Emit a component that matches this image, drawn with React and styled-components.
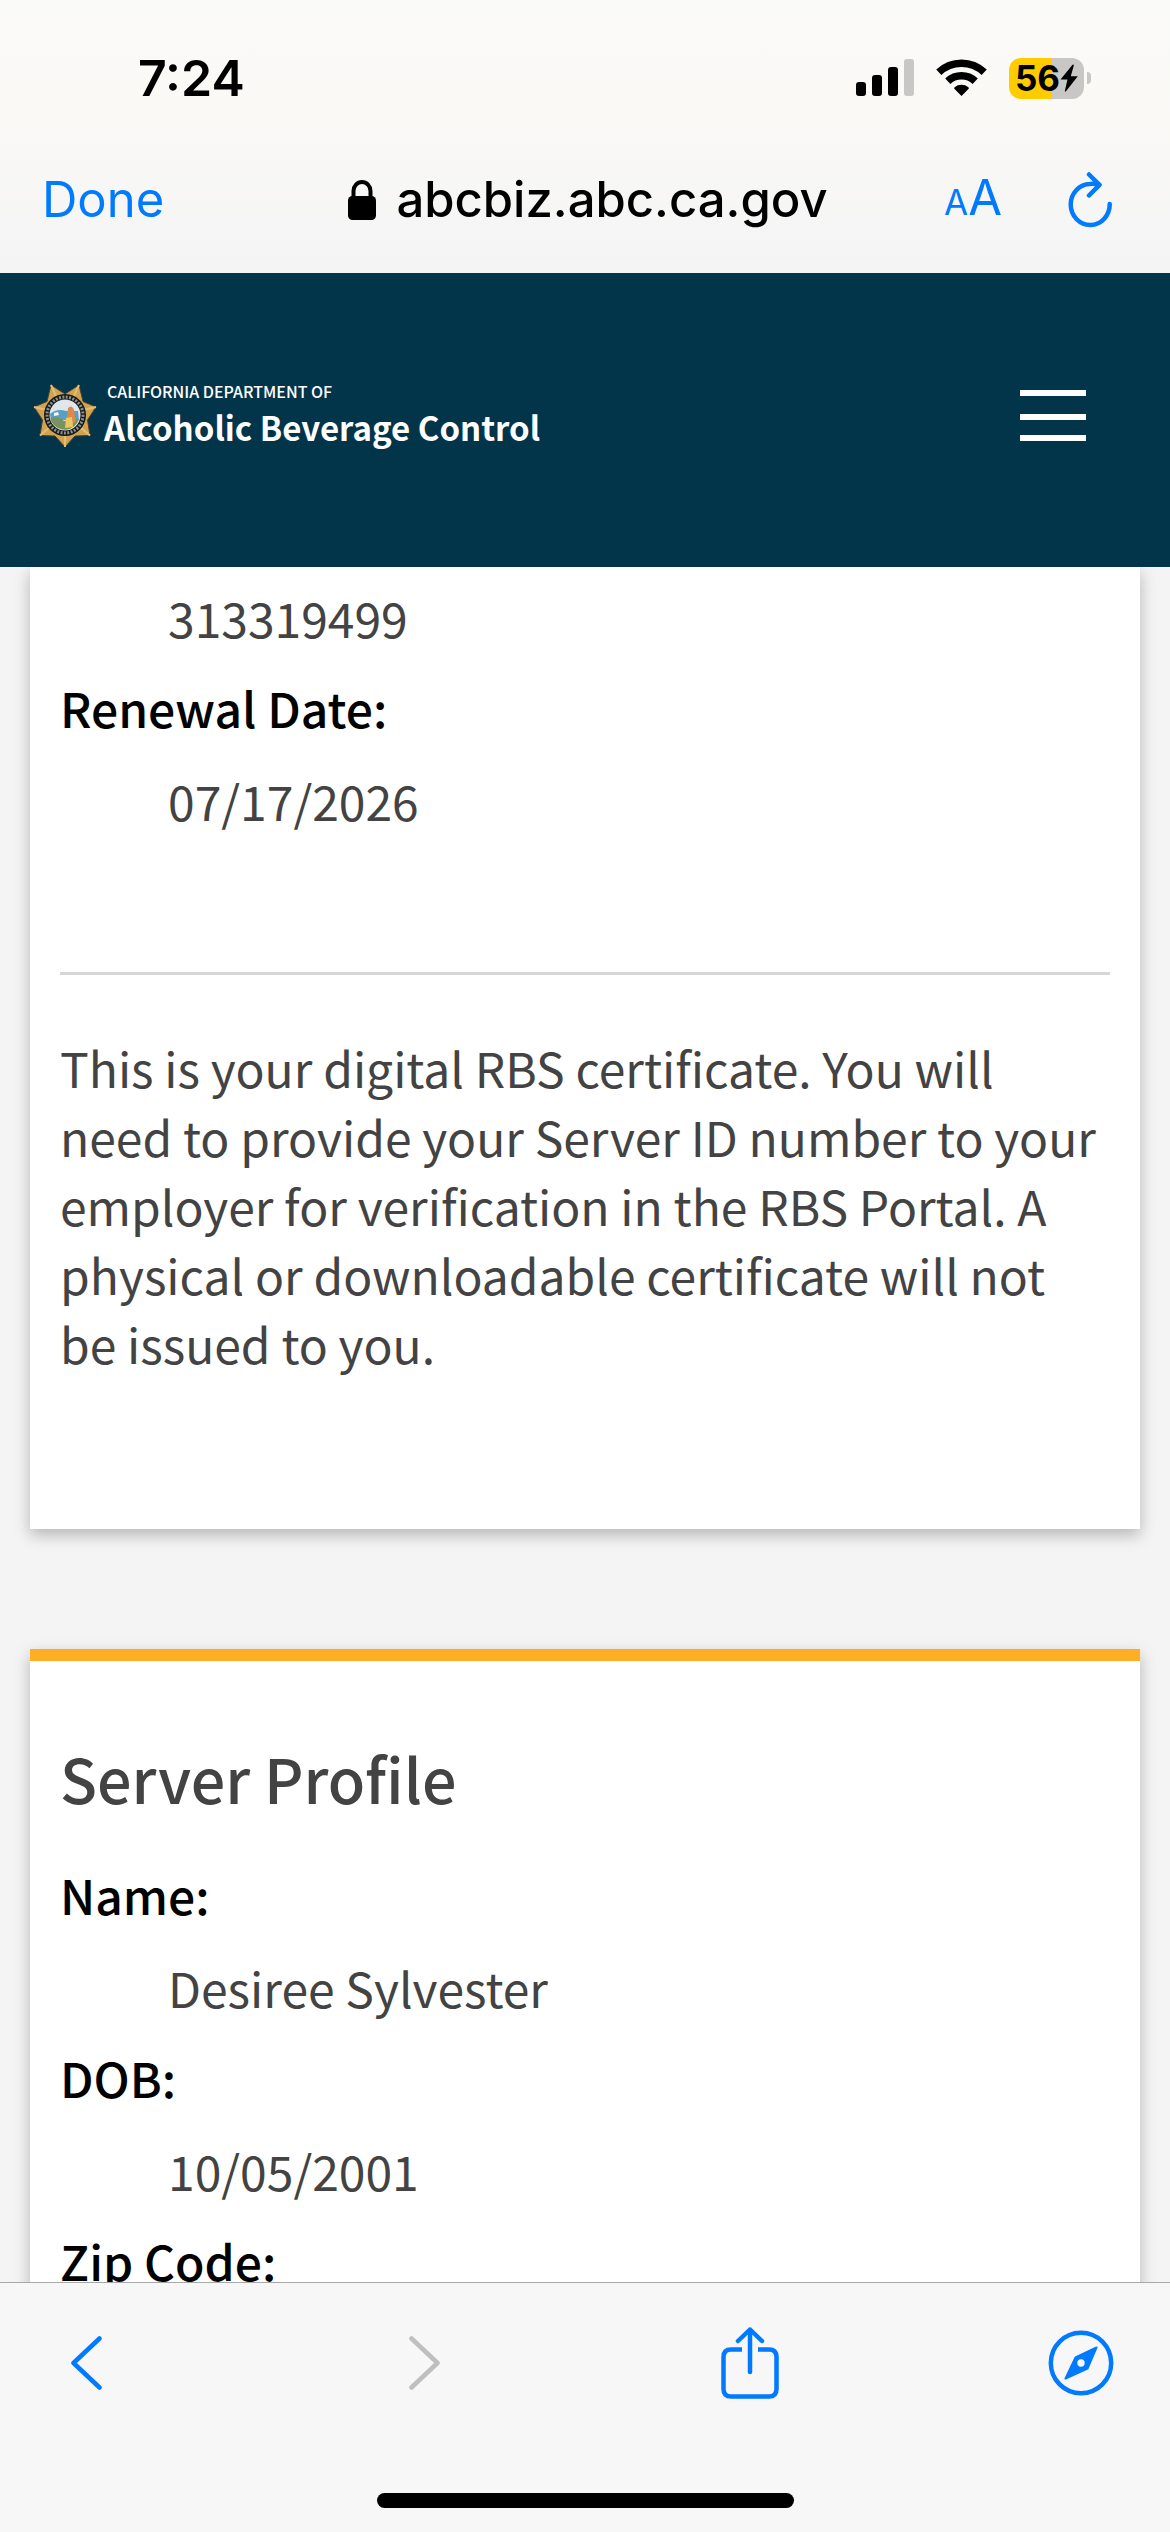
import React from 'react';
import styled, { createGlobalStyle } from 'styled-components';

const profile = [
  { label: 'Name:', value: 'Desiree Sylvester' },
  { label: 'DOB:', value: '10/05/2001' },
  { label: 'Zip Code:' },
];

function StatusBar() {
  return (
    <Status>
      <Time>7:24</Time>
      <StatusIcons>
        <svg width='58' height='38' viewBox='0 0 58 38'>
          <rect x='0' y='23' width='10' height='14' rx='3' />
          <rect x='16' y='16' width='10' height='21' rx='3' />
          <rect x='32' y='8' width='10' height='29' rx='3' />
          <rect x='48' y='0' width='10' height='37' rx='3' fill='#c8c7c5' />
        </svg>
        <svg width='51' height='38' viewBox='0 0 51 38'>
          <path d='M25.5 37 L18.3 29.8 Q17.8 29 18.6 28.3 A11 11 0 0 1 32.4 28.3 Q33.2 29 32.7 29.8 Z' />
          <path
            d='M11.8 22.3 A20 20 0 0 1 39.2 22.3'
            fill='none'
            stroke='#000'
            strokeWidth='7.5'
          />
          <path
            d='M2.8 13.2 A33 33 0 0 1 48.2 13.2'
            fill='none'
            stroke='#000'
            strokeWidth='7.5'
          />
        </svg>
        <Battery>
          <BatteryBody>
            56
            <svg width='18' height='28' viewBox='0 0 18 28'>
              <path d='M12.5 0.8 L0.5 15.5 H7.5 L4.8 27 Q5 28 6 27.2 L17.8 12.2 H10.8 L13.8 1.4 Q13.5 0 12.5 0.8 Z' />
            </svg>
          </BatteryBody>
          <BatteryTip />
        </Battery>
      </StatusIcons>
    </Status>
  );
}

function AddressBar() {
  return (
    <Address>
      <DoneButton>Done</DoneButton>
      <Url>
        <svg width='28' height='40' viewBox='0 0 28 40'>
          <rect x='0' y='16' width='28' height='24' rx='4.5' />
          <path
            d='M5.5 18 V11 A8.5 9 0 0 1 22.5 11 V18'
            fill='none'
            stroke='#000'
            strokeWidth='4'
          />
        </svg>
        abcbiz.abc.ca.gov
      </Url>
      <AddressActions>
        <TextSizeButton aria-label='Text size'>
          <small>A</small>A
        </TextSizeButton>
        <IconButton aria-label='Reload'>
          <svg width='44' height='56' viewBox='0 0 44 56' {...stroke}>
            <path d='M41.700 32 A19.500 20.500 0 1 1 22 12 Q27 11.5 31 12.8' />
            <path d='M21 2.500 L31.5 12.8 L21 23.5' />
          </svg>
        </IconButton>
      </AddressActions>
    </Address>
  );
}

function Badge() {
  return (
    <svg width='64' height='64' viewBox='0 0 64 64'>
      <path
        d='M18 1 L32 10 L46 1 L50 17.5 L63 23 L54.5 36 L57 51.5 L42 52 L32 63 L22 52 L7 51.5 L9.5 36 L1 23 L14 17.5 Z'
        fill='#d0a350'
        stroke='#4a4133'
        strokeWidth='1'
      />
      <path
        d='M18 1 L24 14 M46 1 L40 14 M63 23 L50 26 M57 51.5 L47 43 M32 63 V50 M7 51.5 L17 43 M1 23 L14 26'
        stroke='#e3bd70'
        strokeWidth='2'
      />
      <circle cx='32' cy='31' r='21' fill='#15191b' />
      <circle
        cx='32'
        cy='31'
        r='18'
        fill='none'
        stroke='#8f8f88'
        strokeWidth='3'
        strokeDasharray='2 1.4'
      />
      <circle cx='32' cy='31' r='15.5' fill='#dfe6ec' />
      <path d='M17 30 Q24 24 33 27 L45 27 L46 36 L18 36 Z' fill='#5a9fc4' />
      <path d='M17.5 34 Q25 31 31 37 L46 35 A15 15 0 0 1 18.5 38 Z' fill='#79935d' />
      <path d='M35 24 Q39 20 41 26 L43 37 L38 42 L33 40 Z' fill='#d98a4e' />
      <path d='M33 34 L39 33 L40 43 L32 44 Z' fill='#eec85c' />
      <path d='M21 29 L25 28 L26 31 L21 32 Z' fill='#f4f7f8' />
    </svg>
  );
}

function SiteHeader() {
  return (
    <Header>
      <Logo href='#'>
        <Badge />
        <LogoText>
          <Department>CALIFORNIA DEPARTMENT OF</Department>
          <Agency>Alcoholic Beverage Control</Agency>
        </LogoText>
      </Logo>
      <MenuButton aria-label='Menu'>
        <svg width='66' height='51' viewBox='0 0 66 51' fill='#fff'>
          <rect y='0' width='66' height='6' />
          <rect y='24' width='66' height='6' />
          <rect y='45' width='66' height='6' />
        </svg>
      </MenuButton>
    </Header>
  );
}

function Toolbar() {
  return (
    <Bottom>
      <Tools>
        <ToolButton aria-label='Back'>
          <svg width='31' height='54' viewBox='0 0 31 54' {...stroke}>
            <path d='M28.5 2.5 L2.5 27 L28.5 51.5' />
          </svg>
        </ToolButton>
        <ToolButton aria-label='Forward' disabled>
          <svg width='31' height='54' viewBox='0 0 31 54' {...stroke}>
            <path d='M2.5 2.5 L28.5 27 L2.5 51.5' />
          </svg>
        </ToolButton>
        <ToolButton aria-label='Share'>
          <svg width='58' height='72' viewBox='0 0 58 72' {...stroke}>
            <path
              d='M21 22.5 H10 Q2.5 22.5 2.5 30 V62 Q2.5 69.5 10 69.5 H48 Q55.5 69.5 55.5 62 V30 Q55.5 22.5 48 22.5 H37'
              strokeLinecap='butt'
            />
            <path d='M29 45 V2.5 M17 14 L29 2.5 L41 14' />
          </svg>
        </ToolButton>
        <ToolButton aria-label='Open in browser'>
          <svg width='66' height='66' viewBox='0 0 66 66' {...stroke}>
            <circle cx='33' cy='33' r='30.2' />
            <path
              d='M48.5 17.5 L39.5 38.5 L17.5 48.5 L27.5 27.5 Z'
              fill='currentColor'
              strokeWidth='2'
            />
            <circle cx='33' cy='33' r='3.7' fill='#f7f7f7' stroke='none' />
          </svg>
        </ToolButton>
      </Tools>
      <HomeIndicator />
    </Bottom>
  );
}

function App() {
  return (
    <Screen>
      <GlobalStyle />
      <BrowserTop>
        <StatusBar />
        <AddressBar />
      </BrowserTop>
      <SiteHeader />
      <Content>
        <CertificateCard>
          <List>
            <Value>313319499</Value>
            <Label>Renewal Date:</Label>
            <Value>07/17/2026</Value>
          </List>
          <Divider />
          <Note>
            This is your digital RBS certificate. You will need to provide your
            Server ID number to your employer for verification in the RBS
            Portal. A physical or downloadable certificate will not be issued to
            you.
          </Note>
        </CertificateCard>

        <ProfileCard>
          <Title>Server Profile</Title>
          <List>
            {profile.map(({ label, value }) => (
              <React.Fragment key={label}>
                <Label>{label}</Label>
                {value && <Value>{value}</Value>}
              </React.Fragment>
            ))}
          </List>
        </ProfileCard>
      </Content>
      <Toolbar />
    </Screen>
  );
}

const stroke = {
  fill: 'none',
  stroke: 'currentColor',
  strokeWidth: 4.5,
  strokeLinecap: 'round',
  strokeLinejoin: 'round',
};

const GlobalStyle = createGlobalStyle`
  * {
    box-sizing: border-box;
  }

  body {
    margin: 0;
    background-color: #f4f4f4;
    font-family: 'Noto Sans CJK SC', 'Noto Sans', sans-serif;
  }

  svg {
    display: block;
    flex-shrink: 0;
  }
`;

const Screen = styled.div`
  height: 100vh;
  display: flex;
  flex-direction: column;
  overflow: hidden;
`;

const BrowserTop = styled.div`
  flex-shrink: 0;
  padding: 48px 0 44px;
  background: linear-gradient(#fafaf8, #faf9f6 45%, #f4f4f5);
  font-family: Inter, 'Liberation Sans', sans-serif;
  color: #000;
`;

const Status = styled.div`
  height: 60px;
  padding: 0 79px 0 138px;
  display: flex;
  justify-content: space-between;
  align-items: center;
`;

const Time = styled.div`
  font-size: 50px;
  font-weight: 600;
  line-height: 60px;
`;

const StatusIcons = styled.div`
  display: flex;
  align-items: center;
  gap: 22px;
`;

const Battery = styled.div`
  display: flex;
  align-items: center;
  gap: 3px;
`;

const BatteryBody = styled.div`
  width: 75px;
  height: 41px;
  border-radius: 12px;
  background: linear-gradient(90deg, #ffcc00 57%, #c8c7c5 57%);
  display: flex;
  justify-content: center;
  align-items: center;
  font-size: 35px;
  font-weight: 700;
`;

const BatteryTip = styled.div`
  width: 4px;
  height: 12px;
  border-radius: 0 6px 6px 0;
  background-color: #c8c7c5;
`;

const Address = styled.div`
  height: 121px;
  padding: 60px 36px 0 42px;
  display: grid;
  grid-template-columns: 1fr auto 1fr;
  align-items: center;
`;

const DoneButton = styled.button`
  justify-self: start;
  padding: 0;
  border: none;
  background: none;
  color: #007aff;
  font: 400 49px/60px Inter, 'Liberation Sans', sans-serif;
`;

const Url = styled.div`
  display: flex;
  align-items: center;
  gap: 20px;
  font-size: 49px;
  font-weight: 500;
  line-height: 60px;
`;

const AddressActions = styled.div`
  justify-self: end;
  margin-right: 22px;
  display: flex;
  align-items: center;
  gap: 66px;
`;

const IconButton = styled.button`
  padding: 0;
  border: none;
  background: none;
  color: #007aff;
`;

const TextSizeButton = styled(IconButton)`
  font: 400 49px/60px Inter, 'Liberation Sans', sans-serif;

  small {
    font-size: 35px;
  }
`;

const Header = styled.header`
  flex-shrink: 0;
  height: 294px;
  padding: 0 84px 9px 33px;
  background-color: #02344a;
  color: #fff;
  display: flex;
  justify-content: space-between;
  align-items: center;
`;

const Logo = styled.a`
  display: flex;
  align-items: center;
  gap: 7px;
  color: inherit;
  text-decoration: none;
`;

const LogoText = styled.div`
  display: flex;
  flex-direction: column;
`;

const Department = styled.span`
  padding-left: 3px;
  font-size: 16px;
  font-weight: 500;
  line-height: 23px;
`;

const Agency = styled.span`
  font-size: 33px;
  font-weight: 700;
  line-height: 48px;
`;

const MenuButton = styled.button`
  padding: 0;
  border: none;
  background: none;
`;

const Content = styled.main`
  flex: 1;
  min-height: 0;
  padding: 0 30px;
  overflow: hidden;
`;

const Card = styled.section`
  padding: 0 30px;
  background-color: #fff;
  box-shadow: 0 6px 15px rgba(0, 0, 0, 0.26);
  color: #434343;
  font-size: 48px;
  line-height: 69px;
`;

const CertificateCard = styled(Card)`
  padding-top: 16px;
  padding-bottom: 151px;
`;

const ProfileCard = styled(Card)`
  margin-top: 120px;
  padding-top: 73px;
  padding-bottom: 151px;
  border-top: 12px solid #fdae24;
`;

const Title = styled.h2`
  margin: 0 0 39px;
  font-size: 61px;
  font-weight: 500;
  line-height: 87px;
`;

const List = styled.dl`
  margin: 0;
`;

const Label = styled.dt`
  margin-bottom: 24px;
  color: #000;
  font-weight: 500;
`;

const Value = styled.dd`
  margin: 0 0 21px 108px;
`;

const Divider = styled.hr`
  height: 3px;
  margin: 137px 0 58px;
  border: none;
  background-color: #d6d6d6;
`;

const Note = styled.p`
  margin: 0;
`;

const Bottom = styled.footer`
  flex-shrink: 0;
  height: 250px;
  padding-bottom: 24px;
  border-top: 1px solid #a8a8a8;
  background-color: #f7f7f7;
  display: flex;
  flex-direction: column;
  justify-content: space-between;
  align-items: center;
`;

const Tools = styled.div`
  width: 100%;
  padding: 42px 56px 0 53px;
  display: grid;
  grid-template-columns: 338fr 326fr 331fr 66px;
`;

const ToolButton = styled.button`
  width: 66px;
  height: 76px;
  padding: 0;
  border: none;
  background: none;
  color: #007aff;
  display: flex;
  justify-content: center;
  align-items: center;

  &:disabled {
    color: #bfbfbf;
  }
`;

const HomeIndicator = styled.div`
  width: 417px;
  max-width: 60%;
  height: 15px;
  border-radius: 8px;
  background-color: #000;
`;

export default App;
